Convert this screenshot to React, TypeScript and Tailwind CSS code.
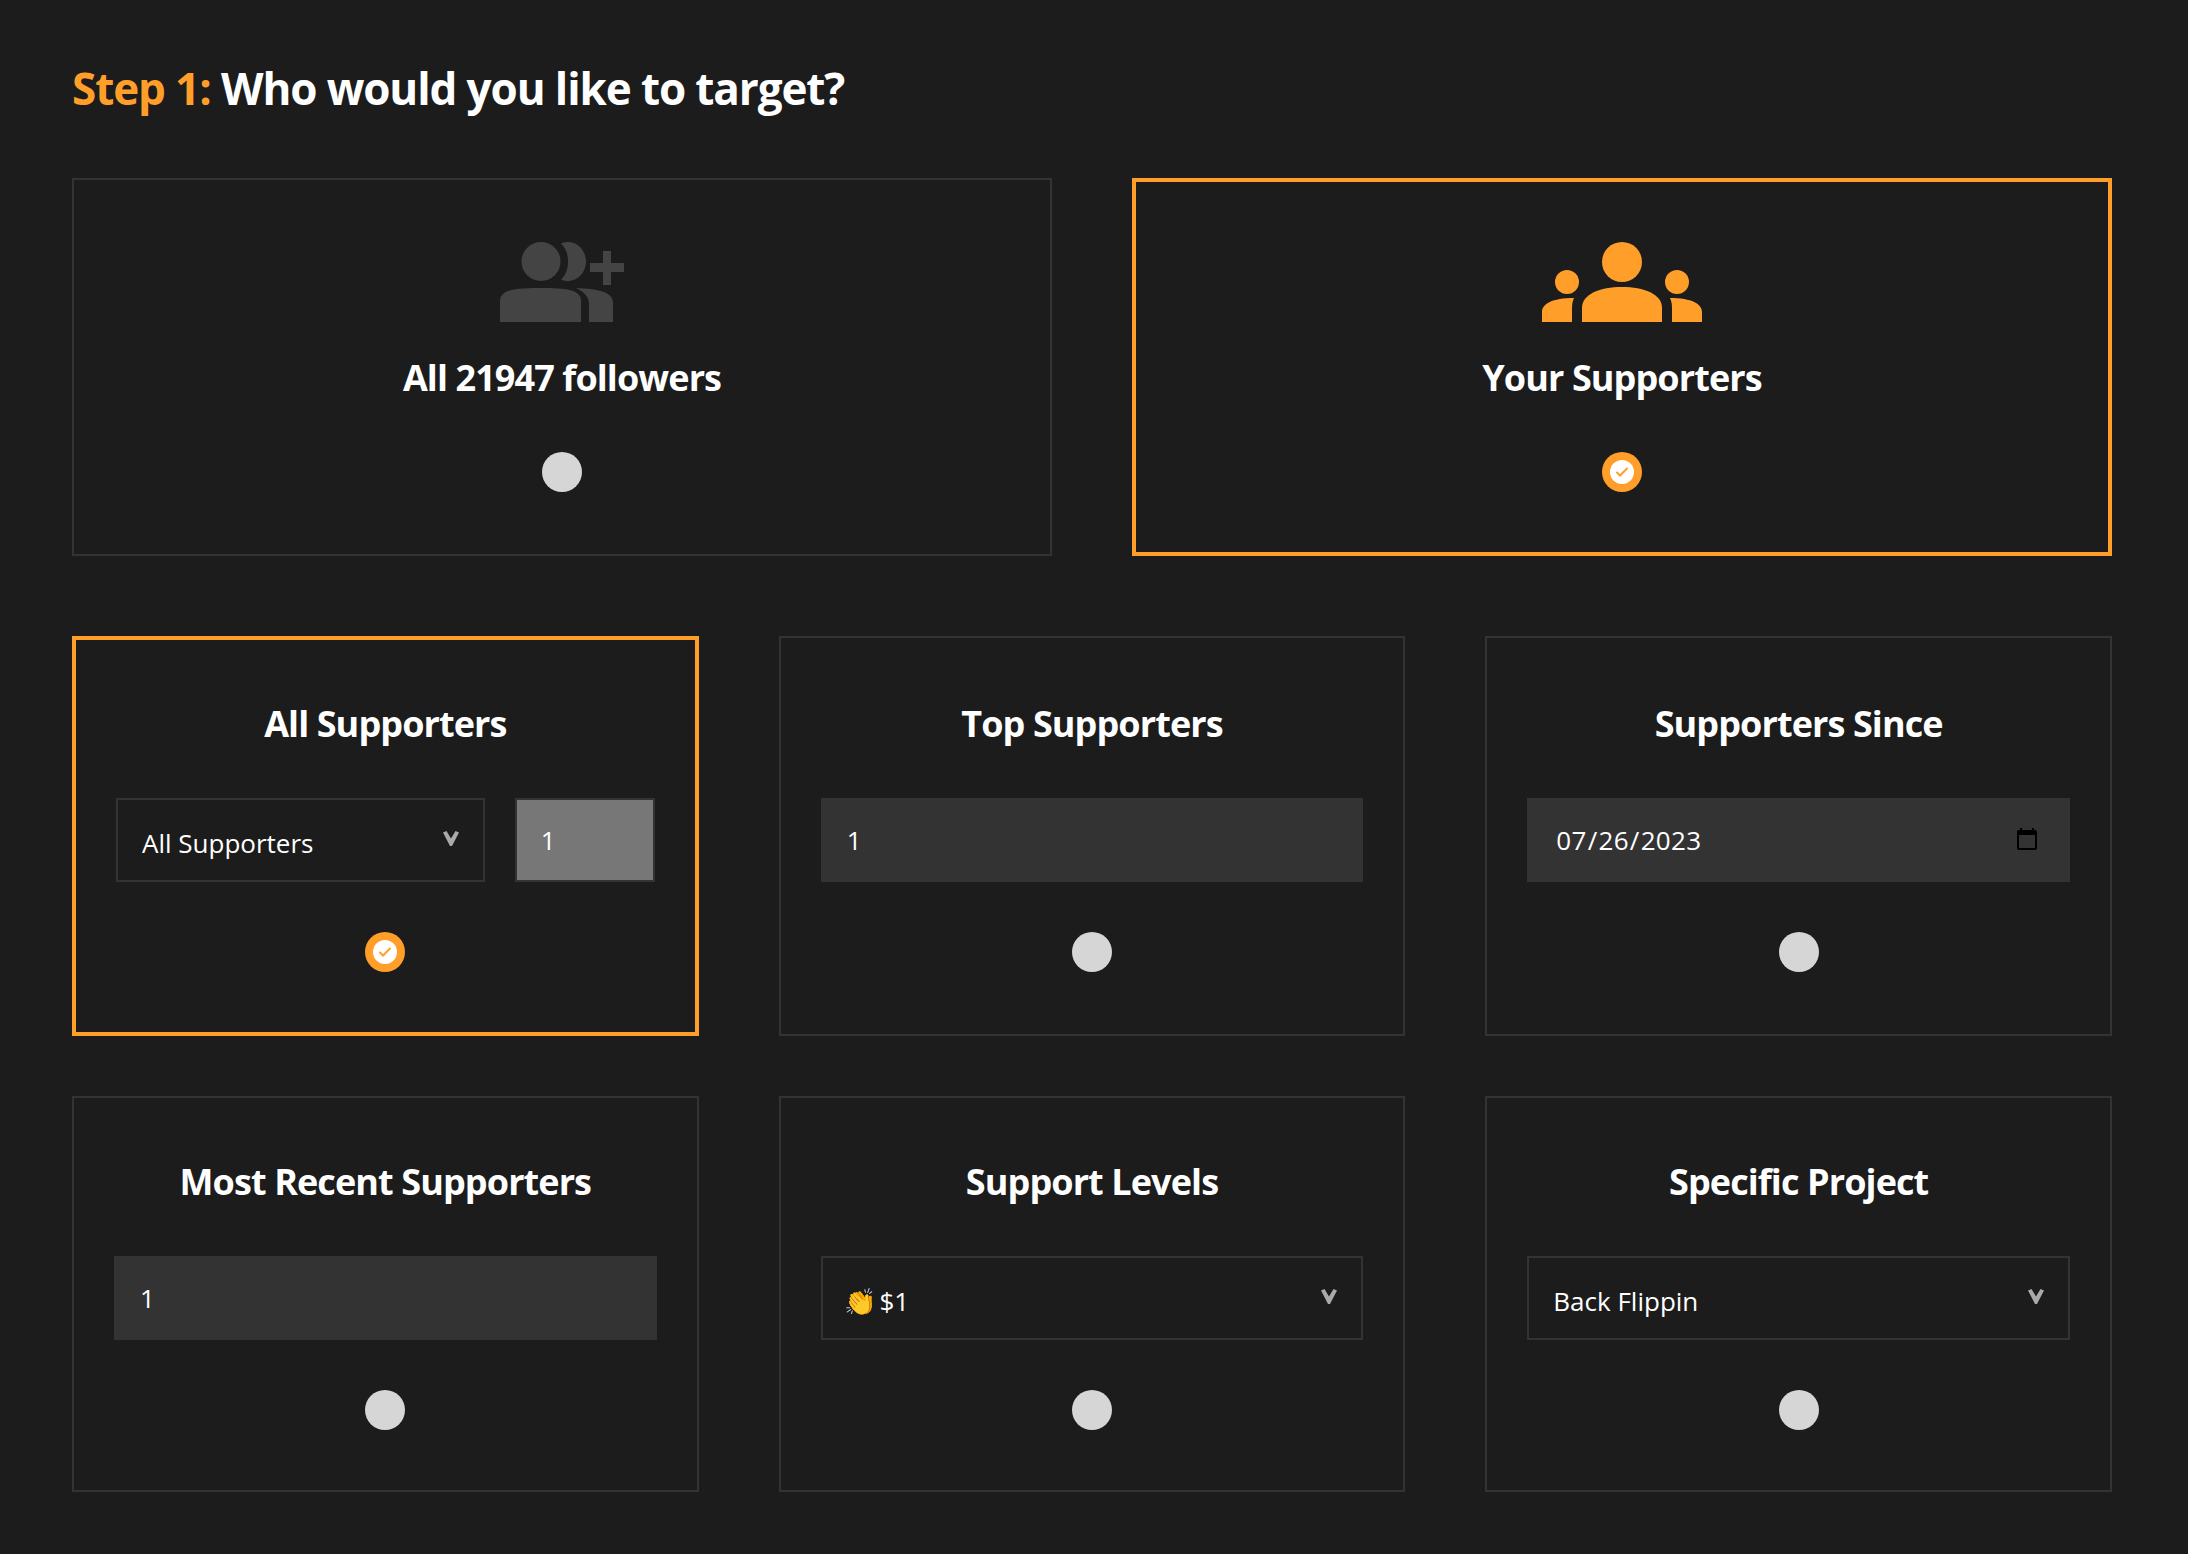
function GroupAddIcon() {
  return (
    <svg width="124" height="80" viewBox="0 0 124 80" fill="#444444">
      <circle cx="41" cy="19.5" r="19.5" />
      <path d="M0 80V59C0 54 3 51 8 49C17 46 30 46 41 46C52 46 64 46 73 49C78 51 81 54 81 59V80Z" />
      <path d="M61 1.5C63.5 .5 66 0 68 0C78 0 86 9 86 19.5C86 30 78 39 68 39C66 39 63.5 38.5 61 37.5C66 33 68 26.5 68 19.5C68 12.5 66 6 61 1.5Z" />
      <path d="M76 46C88 46.500 97 47.500 104 50C110 52.500 113 56 113 61V80H89V62C89 55 84 49.500 76 46Z" />
      <path d="M103 9H111V21H124V30H111V43H103V30H90V21H103Z" />
    </svg>
  );
}

function GroupsIcon() {
  return (
    <svg width="160" height="80" viewBox="0 0 160 80" fill="#FF9F2A">
      <circle cx="80" cy="20" r="20" />
      <path d="M40 80V66C40 52 58 45 80 45C102 45 120 52 120 66V80Z" />
      <circle cx="25" cy="40" r="12" />
      <circle cx="135" cy="40" r="12" />
      <path d="M0 80V70C0 62 10 56 32 56C30 60 30 64 30 68V80Z" />
      <path d="M160 80V70C160 62 150 56 128 56C130 60 130 64 130 68V80Z" />
    </svg>
  );
}

function Radio({ checked }: { checked?: boolean }) {
  if (!checked) return <div className="w-10 h-10 rounded-full bg-[#D6D6D6] mx-auto shrink-0" />;
  return (
    <div className="w-10 h-10 rounded-full bg-[#FF9F2A] mx-auto shrink-0 flex items-center justify-center">
      <div className="w-6 h-6 rounded-full bg-white flex items-center justify-center">
        <svg width="14" height="12" viewBox="0 0 14 12" fill="none" stroke="#FF9F2A" strokeWidth="2">
          <path d="M1.500 6L5 9.500L12.500 2" />
        </svg>
      </div>
    </div>
  );
}

function Select({ value, className = "", selectClass = "pl-6" }: { value: string; className?: string; selectClass?: string }) {
  return (
    <div className={`relative h-[84px] ${className}`}>
      <select
        defaultValue={value}
        className={`appearance-none w-full h-full bg-transparent border-2 border-[#333333] rounded-none pt-1.5 pr-12 text-[26px] text-white font-['Open_Sans',sans-serif] outline-none ${selectClass}`}
      >
        <option>{value}</option>
      </select>
      <svg className="absolute right-[26px] top-[33px] pointer-events-none" width="16" height="15" viewBox="0 0 16 15" fill="#AAAAAA">
        <path d="M0 1.500L3.500 0L8 7.500L12.500 0L16 1.500L9 15H7Z" />
      </svg>
    </div>
  );
}

function Card({ title, selected, children, icon }: { title: string; selected?: boolean; children?: React.ReactNode; icon?: React.ReactNode }) {
  return (
    <div className={`flex flex-col justify-center px-10 py-[60px] ${selected ? "border-4 border-[#FF9F2A]" : "border-2 border-[#333333]"}`}>
      {icon && <div className="flex justify-center mb-8">{icon}</div>}
      <h3 className="text-center text-[36px] leading-[48px] font-bold text-white tracking-[-0.9px] mb-[50px]">{title}</h3>
      {children && <div className="mb-[50px]">{children}</div>}
      <Radio checked={selected} />
    </div>
  );
}

const inputCls = "block w-full h-[84px] bg-[#333333] text-[26px] text-white outline-none font-['Open_Sans',sans-serif]";

export default function App() {
  return (
    <div className="min-h-[1554px] bg-[#1C1C1C] pl-[72px] pr-[76px] pt-[58px] font-['Open_Sans',sans-serif]">
      <h1 className="text-[44px] leading-[60px] font-bold text-white mb-[60px] tracking-[-1.1px]">
        <span className="text-[#FF9F2A]">Step 1:</span> Who would you like to target?
      </h1>
      <div className="grid grid-cols-2 gap-x-20 mb-20">
        <Card title="All 21947 followers" icon={<GroupAddIcon />} />
        <Card title="Your Supporters" icon={<GroupsIcon />} selected />
      </div>
      <div className="grid grid-cols-3 gap-x-20 gap-y-[60px]">
        <Card title="All Supporters" selected>
          <div className="flex gap-[30px]">
            <Select value="All Supporters" className="flex-1 min-w-0" />
            <input
              defaultValue="1"
              className="block w-[140px] h-[84px] bg-[#777777] border-2 border-[#333333] px-6 text-[26px] text-white outline-none"
            />
          </div>
        </Card>
        <Card title="Top Supporters">
          <input defaultValue="1" className={`${inputCls} px-[26px]`} />
        </Card>
        <Card title="Supporters Since">
          <input type="date" defaultValue="2023-07-26" className={`${inputCls} px-7 tracking-[0.3px]`} />
        </Card>
        <Card title="Most Recent Supporters">
          <input defaultValue="1" className={`${inputCls} px-[26px]`} />
        </Card>
        <Card title="Support Levels">
          <Select value="👏 $1" selectClass="pl-[21px] [word-spacing:-3px]" />
        </Card>
        <Card title="Specific Project">
          <Select value="Back Flippin" />
        </Card>
      </div>
    </div>
  );
}
